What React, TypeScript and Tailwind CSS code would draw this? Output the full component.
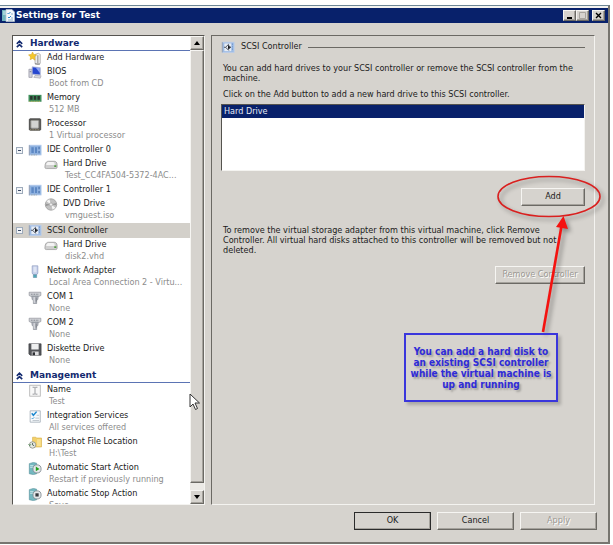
import type { ReactNode } from "react";
import clsx from "clsx";

type IconName =
  | "add"
  | "bios"
  | "memory"
  | "cpu"
  | "card"
  | "disk"
  | "dvd"
  | "scsi"
  | "network"
  | "com"
  | "floppy"
  | "name"
  | "services"
  | "snapshot"
  | "start"
  | "stop";

interface TreeItem {
  icon: IconName;
  title: string;
  detail?: string;
  child?: boolean;
  expandable?: boolean;
  selected?: boolean;
}

const hardware: TreeItem[] = [
  { icon: "add", title: "Add Hardware" },
  { icon: "bios", title: "BIOS", detail: "Boot from CD" },
  { icon: "memory", title: "Memory", detail: "512 MB" },
  { icon: "cpu", title: "Processor", detail: "1 Virtual processor" },
  { icon: "card", title: "IDE Controller 0", expandable: true },
  { icon: "disk", title: "Hard Drive", detail: "Test_CC4FA504-5372-4AC...", child: true },
  { icon: "card", title: "IDE Controller 1", expandable: true },
  { icon: "dvd", title: "DVD Drive", detail: "vmguest.iso", child: true },
  { icon: "scsi", title: "SCSI Controller", expandable: true, selected: true },
  { icon: "disk", title: "Hard Drive", detail: "disk2.vhd", child: true },
  { icon: "network", title: "Network Adapter", detail: "Local Area Connection 2 - Virtu..." },
  { icon: "com", title: "COM 1", detail: "None" },
  { icon: "com", title: "COM 2", detail: "None" },
  { icon: "floppy", title: "Diskette Drive", detail: "None" },
];

const management: TreeItem[] = [
  { icon: "name", title: "Name", detail: "Test" },
  { icon: "services", title: "Integration Services", detail: "All services offered" },
  { icon: "snapshot", title: "Snapshot File Location", detail: "H:\\Test" },
  { icon: "start", title: "Automatic Start Action", detail: "Restart if previously running" },
  { icon: "stop", title: "Automatic Stop Action", detail: "Save" },
];

const serverShape = (
  <>
    <path d="M1 2l5-1.500 4 1v13l-4 1-5-1z" fill="#74b8c0" stroke="#4c8b94" strokeWidth=".7" />
    <path d="M2 4.500h4M2 6.500h4" stroke="#d9f2f3" />
    <circle cx="10.500" cy="8.500" r="5" fill="#e4e8ea" stroke="#7b868c" />
  </>
);

const shapes: Record<IconName, ReactNode> = {
  add: (
    <>
      <path d="M8 3l4-1.500 2.500 1.500v11l-3 1.500L8 14.500z" fill="#ececec" stroke="#9a9a9a" strokeWidth=".8" />
      <path d="M11.500 4v10M8 14.500l6 .5" stroke="#777" />
      <path d="M5 0l1.500 3 3.500.5L7.500 6l.5 4L5 8 2 9.500 2.500 6 0 3.500 3.500 3z" fill="#f3c72c" stroke="#d5a21b" strokeWidth=".6" />
    </>
  ),
  bios: (
    <>
      <path d="M.5 4h4v10h-4z" fill="#d2d3dc" stroke="#8c8d9c" strokeWidth=".8" />
      <path d="M1.500 7h2" stroke="#666b80" />
      <path d="M4.500 1l10 1v9l-10-1z" fill="#2647cf" stroke="#b7bcd6" />
      <path d="M9 2l5 .5v6z" fill="#8ea6f3" />
      <path d="M8 11.500l7.500.5-1 3-8-1z" fill="#d8d8dd" stroke="#9292a0" strokeWidth=".6" />
    </>
  ),
  memory: (
    <>
      <rect x="0" y="3.500" width="16" height="8.500" fill="#3f8d5b" />
      <path d="M2 5h3v4.500H2zM6.500 5h3v4.500h-3zM11 5h3v4.500h-3z" fill="#2b352e" />
      <path d="M1 11.500h14" stroke="#d9bb55" strokeDasharray="1 1" />
    </>
  ),
  cpu: (
    <>
      <rect x="1" y="1" width="14" height="14" rx="1" fill="#5e5e5c" stroke="#3b3b3a" />
      <rect x="3" y="3" width="9.500" height="9.500" rx="1" fill="#d2d3d1" stroke="#9a9a94" />
      <path d="M2 14.500h12" stroke="#b9a877" strokeDasharray="1 1" />
    </>
  ),
  card: (
    <>
      <rect x="1" y="1.500" width="14.500" height="12" fill="#8fb2e0" stroke="#b3cbec" />
      <path d="M1 1.500V14" stroke="#8b95a5" />
      <path d="M3.500 4h3v7h-3zM8 4h2.500v7H8z" fill="#5c88c4" />
      <path d="M13 3.500v3M13 8.500v3" stroke="#4c74ae" strokeWidth="1.500" />
      <path d="M3 13.500h8" stroke="#8c9187" strokeDasharray="1 1" />
    </>
  ),
  disk: (
    <>
      <path d="M.8 8C1.500 5 3 4 5 4h7c2 0 3.500 1.500 3.500 4v3c0 1.500-.5 2-2 2h-11c-1.500 0-2-.5-2-2z" fill="#cfcfcf" stroke="#8e8e8e" strokeWidth=".8" />
      <path d="M2 8.500C3 5.500 4 5 5.500 5h5c1.500 0 2 1.500 2 3.500z" fill="#f4f4f4" />
      <path d="M12 10h2.500" stroke="#4d9c3c" strokeWidth="2" />
    </>
  ),
  dvd: (
    <>
      <circle cx="8" cy="8" r="7" fill="#c2c2c2" stroke="#a0a0a0" />
      <path d="M8 8L2.500 4 6 1.500zM8 8l5.500 4-3.500 2.500z" fill="#f5f5f5" />
      <path d="M8 8l6.500-2v3zM8 8L1.500 10V7z" fill="#999" />
      <circle cx="8" cy="8" r="2" fill="#eee" stroke="#999" strokeWidth=".7" />
    </>
  ),
  scsi: (
    <>
      <rect x="1" y="1.500" width="14.500" height="12.500" fill="#9dbbe4" stroke="#b9cdea" />
      <path d="M1 1.500V14" stroke="#8b95a5" />
      <path d="M13.500 3v9" stroke="#6f94c9" strokeDasharray="2 1" />
      <rect x="3.500" y="3" width="8.500" height="9.500" fill="#e6ecf5" />
      <path d="M9 3.800L5 7.700l4 4M3 7.700h2M8 5l3.500 2.700L8 10.500" fill="none" stroke="#3f4650" strokeWidth="1.100" />
      <path d="M8 5.500l3 2.200-3 2.300z" fill="#15181e" />
    </>
  ),
  network: (
    <>
      <path d="M4.500 1h7v9l-1.500 2H6l-1.500-2z" fill="#c4cfeb" stroke="#8d99bd" strokeWidth=".8" />
      <path d="M7 2v7M9 2v7" stroke="#f3f5fa" />
      <path d="M6 12h4v3.500H6z" fill="#4aa9b9" stroke="#6b8aa3" strokeWidth=".7" />
    </>
  ),
  com: (
    <>
      <path d="M.8 1.500h14.400v4l-2 1H2.800l-2-1z" fill="#cfd1d6" stroke="#8b8e96" strokeWidth=".8" />
      <path d="M3 4h10" stroke="#5e626d" strokeDasharray="1 1" />
      <path d="M4 6.500h8l-.5 4-1.500 1v4H6v-4l-1.500-1z" fill="#b2b5bd" stroke="#82868f" strokeWidth=".8" />
      <path d="M7 7.500v7" stroke="#eeeff2" />
      <path d="M9.500 8v5" stroke="#74787f" />
    </>
  ),
  floppy: (
    <>
      <path d="M.5 1h15v14H2L.5 13.500z" fill="#55575b" stroke="#3a3c40" strokeWidth=".8" />
      <path d="M3.500 1h9v7h-9z" fill="#eeeff0" />
      <path d="M4 10.500h8.500V15H4z" fill="#dddddf" />
      <path d="M5 11.500h3V15H5z" fill="#2c2e32" />
    </>
  ),
  name: (
    <>
      <rect x="1.500" y="1.500" width="13" height="13.500" fill="#f8f8f8" stroke="#b0b0b0" />
      <path d="M5 4h2.500l.5.500.5-.5H11M8 4.500v7.500M5 12.500h2.500l.5-.5.5.5H11" fill="none" stroke="#85878c" />
    </>
  ),
  services: (
    <>
      <path d="M2 1h12.500v14H2z" fill="#f7fafc" stroke="#a4aeb8" />
      <path d="M4 4l2 2.500L10 2" fill="none" stroke="#1c88cf" strokeWidth="1.800" />
      <path d="M4 10l1 1 2-2" fill="none" stroke="#1c88cf" />
      <path d="M10 6.500h3M8.500 10h4.500M5 13h8" stroke="#b1bac2" />
    </>
  ),
  snapshot: (
    <>
      <path d="M5 1.500h4l1 1h6v11H5z" fill="#f3d06a" stroke="#d9b24b" strokeWidth=".8" />
      <path d="M10.500 4H15v8.500h-4.500z" fill="#f9e293" />
      <circle cx="5" cy="11" r="4" fill="#e7e9e4" stroke="#8b9088" />
      <path d="M5 8.500V11l2 1" fill="none" stroke="#3b5244" />
      <path d="M0 10l1.500 2L3 10" fill="none" stroke="#4d8a50" />
    </>
  ),
  start: (
    <>
      {serverShape}
      <path d="M9 5.500l4.500 3-4.500 3z" fill="#23a01d" />
    </>
  ),
  stop: (
    <>
      {serverShape}
      <path d="M8.500 6.500h4v4h-4z" fill="#34383d" />
    </>
  ),
};

const Icon = ({ name }: { name: IconName }) => (
  <svg viewBox="0 0 16 16" className="h-[13px] w-[14px] shrink-0" fill="none" aria-hidden>
    {shapes[name]}
  </svg>
);

const TreeRow = ({ item }: { item: TreeItem }) => (
  <li>
    <button
      type="button"
      className={clsx(
        "flex w-full items-center pl-[3px] text-left",
        item.selected ? "h-[15px] bg-[#d3d0ca]" : "h-[14px]",
      )}
    >
      <span className={clsx("shrink-0", item.child ? "w-[28px]" : "w-[12px]")}>
        {item.expandable && (
          <svg viewBox="0 0 7 7" className="size-[7px]" aria-hidden>
            <rect x=".5" y=".5" width="6" height="6" fill="#f2f4f7" stroke="#9eabbb" />
            <path d="M2 3.500h3" stroke="#3a4a66" />
          </svg>
        )}
      </span>
      <Icon name={item.icon} />
      <span className="ml-[5px] whitespace-nowrap">{item.title}</span>
    </button>
    {item.detail && (
      <p
        className={clsx(
          "h-[12px] whitespace-nowrap leading-[9px] text-[#8c8c8c]",
          item.child ? "pl-[52px]" : "pl-[36px]",
        )}
      >
        {item.detail}
      </p>
    )}
  </li>
);

const TreeSection = ({ title, items }: { title: string; items: TreeItem[] }) => (
  <section>
    <h2 className="flex h-[15px] items-center border-b border-[#5b74b4] pt-px pl-[3px] font-['DejaVu_Sans',sans-serif] text-[9px] font-bold text-[#12296f]">
      <svg viewBox="0 0 7 8" className="mr-[7px] h-[8px] w-[7px]" fill="none" aria-hidden>
        <path d="M.8 3.800L3.500 1.200l2.700 2.600M.8 7.200l2.700-2.600 2.700 2.600" stroke="#12296f" strokeWidth="1.600" />
      </svg>
      {title}
    </h2>
    <ul>
      {items.map((item, i) => (
        <TreeRow key={i} item={item} />
      ))}
    </ul>
  </section>
);

const raised =
  "border border-t-[#f6f5f2] border-l-[#f6f5f2] border-r-[#6b6964] border-b-[#6b6964] bg-[#d6d3ce] shadow-[inset_-1px_-1px_0_#a5a29c]";

const ScrollButton = ({ label, d }: { label: string; d: string }) => (
  <button type="button" aria-label={label} className={clsx(raised, "flex h-[14px] items-center justify-center")}>
    <svg viewBox="0 0 6 4" className="h-[4px] w-[6px]" aria-hidden>
      <path d={d} fill="#000" />
    </svg>
  </button>
);

interface PushButtonProps {
  children: ReactNode;
  className?: string;
  disabled?: boolean;
  isDefault?: boolean;
}

const PushButton = ({ children, className, disabled, isDefault }: PushButtonProps) => (
  <button
    type="button"
    disabled={disabled}
    className={clsx(
      raised,
      "h-[18px] disabled:text-[#9c9993] disabled:[text-shadow:1px_1px_0_#fff]",
      isDefault && "outline outline-[#2b2b2b] -outline-offset-1",
      className,
    )}
  >
    {children}
  </button>
);

const TitleBar = () => (
  <header className="flex h-[15px] shrink-0 items-center bg-[#08216b] pr-[3px] pl-[2px]">
    <svg viewBox="0 0 13 13" className="size-[13px]" fill="none" aria-hidden>
      <path d="M0 1h5v11H0z" fill="#6fb4bf" />
      <path d="M1 3h3M1 5h3" stroke="#d5eef0" />
      <path d="M4 .5h6l2.500 2.500v9.500H4z" fill="#f4f8fb" stroke="#b8c6d2" strokeWidth=".7" />
      <path d="M5.500 4l1 1 2-2M6 8l1 1 2-2" stroke="#2b86c9" />
      <path d="M9 5h2M9 9h2M6 11h5" stroke="#8fb1ca" />
    </svg>
    <h1 className="ml-px font-['DejaVu_Sans',sans-serif] text-[9px] font-bold text-white">
      Settings for Test
    </h1>
    <div className="ml-auto flex">
      <button type="button" aria-label="Minimize" className={clsx(raised, "h-[11px] w-[13px]")}>
        <svg viewBox="0 0 11 9" aria-hidden>
          <path d="M3 7h5" stroke="#000" strokeWidth="2" />
        </svg>
      </button>
      <button type="button" aria-label="Maximize" disabled className={clsx(raised, "h-[11px] w-[13px]")}>
        <svg viewBox="0 0 11 9" fill="none" aria-hidden>
          <path d="M2.500 1.500h6v6h-6z" stroke="#a7a49e" />
        </svg>
      </button>
      <button type="button" aria-label="Close" className={clsx(raised, "ml-[3px] h-[11px] w-[13px]")}>
        <svg viewBox="0 0 11 9" aria-hidden>
          <path d="M3 2l5 5M8 2L3 7" stroke="#000" strokeWidth="1.400" />
        </svg>
      </button>
    </div>
  </header>
);

const Sidebar = () => (
  <nav
    aria-label="Settings"
    className="relative flex w-[193px] shrink-0 border border-t-[#55534f] border-l-[#55534f] border-r-[#f4f3f0] border-b-[#f4f3f0] bg-white"
  >
    <div className="min-w-0 flex-1 overflow-hidden">
      <TreeSection title="Hardware" items={hardware} />
      <TreeSection title="Management" items={management} />
    </div>
    <div className="flex w-[14px] shrink-0 flex-col bg-[#eceae6]">
      <ScrollButton label="Scroll up" d="M0 4l3-4 3 4z" />
      <div className={clsx(raised, "flex-1")} />
      <div className="h-[7px]" />
      <ScrollButton label="Scroll down" d="M0 0l3 4 3-4z" />
    </div>
    {/* mouse pointer */}
    <svg viewBox="0 0 12 18" className="absolute top-[357px] left-[176px] h-[18px] w-[12px]" aria-hidden>
      <path d="M1 1v13l3-3 2.500 5.500 2-1L6 10h4.500z" fill="#fff" stroke="#333" />
    </svg>
  </nav>
);

const Callout = () => (
  <>
    <svg
      viewBox="0 0 120 165"
      className="pointer-events-none absolute top-[134px] right-[-16px] h-[165px] w-[120px] drop-shadow-[3px_3px_2px_rgba(0,0,0,0.35)]"
      fill="none"
      aria-hidden
    >
      <ellipse cx="59" cy="26.500" rx="51" ry="20" stroke="#d9201f" strokeWidth="1.600" />
      <path d="M53 162L71.500 56" stroke="#f4120f" strokeWidth="2.600" />
      <path d="M73.500 46l4.500 13-12-2z" fill="#f4120f" />
    </svg>
    <p className="absolute top-[297px] right-[36px] w-[154px] border-2 border-[#3a36dc] pt-[11px] pb-[10px] text-center font-['DejaVu_Sans_Condensed','DejaVu_Sans',sans-serif] text-[10px] leading-[11px] font-bold text-[#2f2bd8] shadow-[3px_3px_3px_rgba(0,0,0,0.2)] [text-shadow:2px_2px_2px_rgba(0,0,0,0.25)]">
      You can add a hard disk to
      <br />
      an existing SCSI controller
      <br />
      while the virtual machine is
      <br />
      up and running
    </p>
  </>
);

const ControllerPanel = () => (
  <main className="relative min-w-0 flex-1 border border-t-[#6b6964] border-l-[#6b6964] border-r-[#f4f3f0] border-b-[#f4f3f0] pt-[4px] pr-[9px] pl-[9px]">
    <div className="flex h-[14px] items-center">
      <Icon name="scsi" />
      <h2 className="ml-[6px]">SCSI Controller</h2>
      <div className="ml-[6px] h-px flex-1 bg-[#6b6964]" />
    </div>

    <div className="mt-[9px] pr-[6px] pl-[2px] leading-[10px]">
      <p>
        You can add hard drives to your SCSI controller or remove the SCSI controller from the machine.
      </p>
      <p className="mt-[6px]">Click on the Add button to add a new hard drive to this SCSI controller.</p>
    </div>

    <ul
      role="listbox"
      aria-label="Drives"
      className="mt-[5px] h-[67px] border border-t-[#55534f] border-l-[#55534f] border-r-[#f4f3f0] border-b-[#f4f3f0] bg-white"
    >
      <li role="option" aria-selected className="h-[13px] bg-[#08216b] pl-[2px] leading-[12px] text-[#e6eaf5]">
        Hard Drive
      </li>
    </ul>

    <div className="mt-[17px] flex justify-end">
      <PushButton className="w-[64px]">Add</PushButton>
    </div>

    <p className="mt-[19px] pr-[28px] pl-[2px] leading-[10px]">
      To remove the virtual storage adapter from this virtual machine, click Remove Controller. All
      virtual hard disks attached to this controller will be removed but not deleted.
    </p>

    <div className="mt-[11px] flex justify-end">
      <PushButton disabled className="w-[90px]">
        Remove Controller
      </PushButton>
    </div>

    <Callout />
  </main>
);

const App = () => {
  return (
    <div className="h-screen bg-white pt-[5px] pr-[3px] pb-px font-['DejaVu_Sans_Condensed','DejaVu_Sans',sans-serif] text-[9px] text-[#1a1a1a]">
      <div className="flex h-full flex-col border-t border-r-2 border-b-2 border-t-[#6d8796] border-r-[#77756f] border-b-[#77756f] bg-[#d6d3ce]">
        <div className="h-[2px] shrink-0 bg-[#f4f3f0]" />
        <TitleBar />
        <div className="flex min-h-0 flex-1 gap-[6px] pt-[12px] pr-[13px] pl-[12px]">
          <Sidebar />
          <ControllerPanel />
        </div>
        <footer className="flex shrink-0 justify-end gap-[6px] pt-[7px] pr-[11px] pb-[12px]">
          <PushButton isDefault className="w-[77px]">
            OK
          </PushButton>
          <PushButton className="w-[77px]">Cancel</PushButton>
          <PushButton disabled className="w-[77px]">
            Apply
          </PushButton>
        </footer>
      </div>
    </div>
  );
};

export default App;
